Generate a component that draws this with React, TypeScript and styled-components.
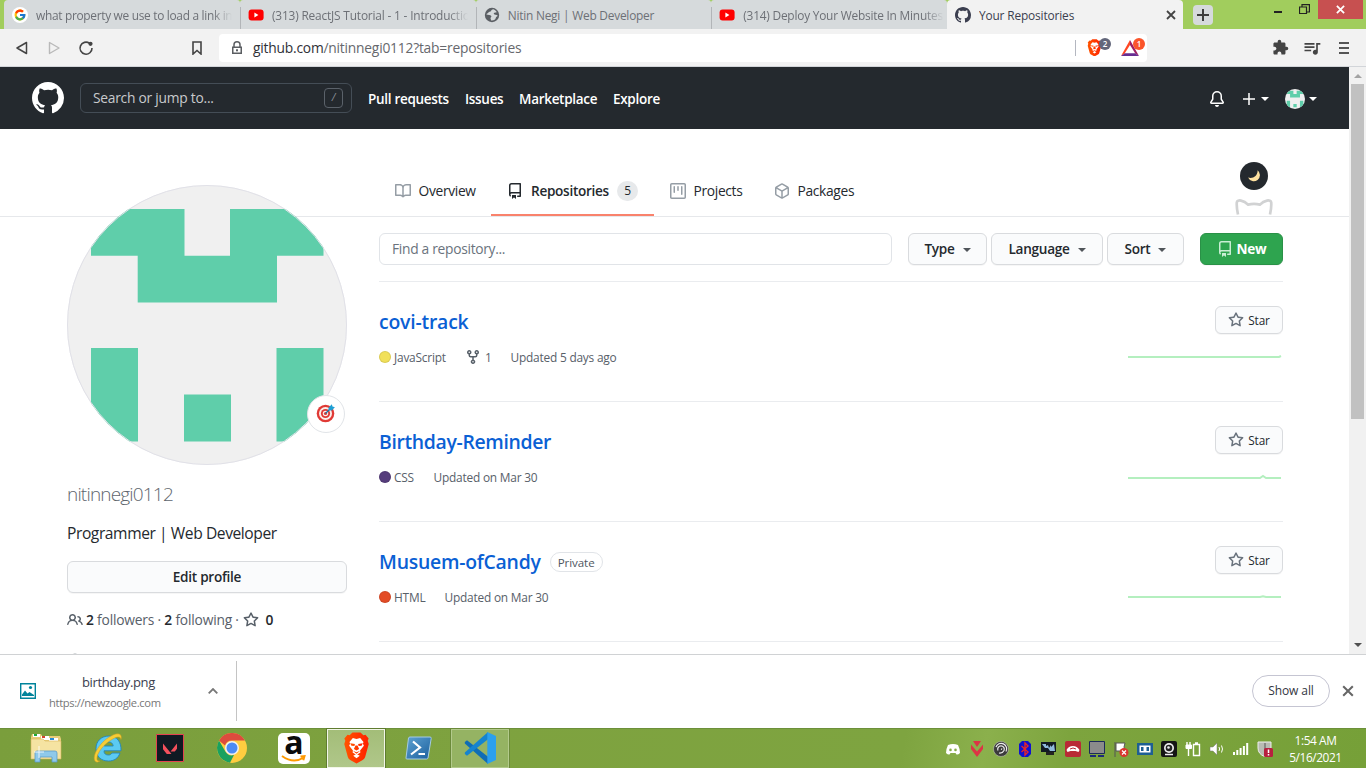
import React from 'react';
import styled, { createGlobalStyle, css } from 'styled-components';
import { FcGoogle } from 'react-icons/fc';
import { MdExtension, MdQueueMusic } from 'react-icons/md';

const Global = createGlobalStyle`
  * { box-sizing: border-box; }
  body { margin: 0; overflow: hidden; background: #fff; color: #24292e; font-family: "Open Sans", "Noto Sans", sans-serif; }
  svg { display: block; flex: none; }
`;

/* ---------- window ---------- */
const Window = styled.div`
  width: 1366px; height: 768px; display: flex; flex-direction: column; overflow: hidden; white-space: nowrap;
`;

/* ---------- tab strip ---------- */
const TabStrip = styled.div`
  height: 29px; flex: none; background: #a1cd5d; display: flex; padding-left: 4px;
`;
const BrowserTab = styled.div<{ $active?: boolean; $first?: boolean }>`
  width: ${p => (p.$first || p.$active ? 236 : 235.67)}px; display: flex; align-items: center; padding: 0 8px; flex: none;
  font-size: 11.9px; color: ${p => (p.$active ? '#3b3e4f' : '#6d7076')};
  background: ${p => (p.$active ? '#f2f2f2' : '#d6dadc')};
  border-radius: ${p => (p.$active ? '4px 4px 0 0' : p.$first ? '4px 3px 0 0' : '3px 3px 0 0')};
`;
const TabTitle = styled.span<{ $fade?: boolean; $ls?: number }>`
  flex: 1; overflow: hidden; margin: 0 -5px 0 8px; line-height: 30px; height: 30px; letter-spacing: ${p => p.$ls ?? -0.22}px;
  ${p => p.$fade && css`mask-image: linear-gradient(90deg, #000 90%, transparent 100%);`}
`;
const TabDivider = styled.i`
  width: 1px; height: 22px; margin: 7px -9px 0 13px; background: #b2b5b8; flex: none; position: relative;
`;
const TabClose = styled.span`margin-right: -1px; padding-left: 5px;`;
const NewTab = styled.div`
  width: 20px; height: 20px; margin: 5px 0 0 10px; border-radius: 4px; background: #d6dadc; display: grid; place-items: center;
`;
const WindowControls = styled.div`
  margin-left: auto; display: flex; height: 19px; padding-right: 3px;
`;
const Control = styled.div<{ $w: number; $close?: boolean }>`
  width: ${p => p.$w}px; display: grid; place-items: center; background: ${p => (p.$close ? '#c75050' : 'transparent')};
`;

/* ---------- toolbar ---------- */
const Toolbar = styled.div`
  height: 38px; flex: none; display: flex; align-items: center; background: #f2f2f2; border-bottom: 1px solid #d2d5d9; color: #3b3e4f; padding-right: 5px;
`;
const ToolButton = styled.div<{ $w: number; $dim?: boolean; $ml?: number | 'auto' }>`
  width: ${p => p.$w}px; display: grid; place-items: center; color: ${p => (p.$dim ? '#b9b9b9' : '#444')};
  margin-left: ${p => (p.$ml === 'auto' ? 'auto' : `${p.$ml ?? 0}px`)};
`;
const Address = styled.div`
  width: 928px; height: 28px; margin-left: 8px; background: #fff; border-radius: 4px; display: flex; align-items: center; padding: 0 0 0 10px;
  font-size: 13.8px; letter-spacing: -0.21px; color: #66686d; b { font-weight: 400; color: #2f3137; }
`;
const Url = styled.span`flex: 1; margin-left: 8px; line-height: 28px;`;
const AddressRule = styled.i`width: 1px; height: 16px; background: #b4b7c0; margin-right: 11px;`;
const ShieldSlot = styled.div`position: relative; width: 34px; height: 18px; display: flex; align-items: center; & + & { width: 26px; }`;
const Badge = styled.span<{ $bg: string }>`
  position: absolute; left: 12px; top: -1px; width: 12px; height: 12px; border-radius: 6px; background: ${p => p.$bg}; color: #fff;
  font-size: 8px; line-height: 12px; text-align: center; font-weight: 600; letter-spacing: 0;
`;

/* ---------- page ---------- */
const Viewport = styled.div`height: 587px; flex: none; display: flex; overflow: hidden;`;
const Page = styled.div`width: 1349px; height: 587px; overflow: hidden; background: #fff;`;
const Scrollbar = styled.div`
  width: 17px; background: #f1f1f1; display: flex; flex-direction: column; justify-content: space-between; align-items: center; padding: 7px 0 7px;
`;
const Thumb = styled.div`width: 13px; height: 335px; background: #c1c1c1; margin: 6px 0 auto;`;

const Header = styled.header`
  height: 62px; background: #24292e; display: flex; align-items: center; padding: 0 32px; color: #fff;
`;
const SearchBox = styled.div`
  width: 272px; height: 30px; margin: 0 16px; border: 1px solid #444d56; border-radius: 6px; display: flex; align-items: center; justify-content: space-between;
  padding: 0 8px 0 12px; font-size: 13.8px; letter-spacing: -0.25px; color: #c8cacc;
`;
const SearchHint = styled.span`line-height: 27px; height: 28px;`;
const SlashKey = styled.span`
  width: 19px; height: 20px; border: 1px solid #5b626a; border-radius: 4px; text-align: center; line-height: 17px; font-size: 10.5px; color: #8a9097; font-style: italic;
`;
const HeaderLink = styled.span<{ $w: number }>`
  width: ${p => p.$w}px; margin-right: 16px; font-size: 13.5px; font-weight: 600; padding-top: 2px; letter-spacing: -0.3px;
`;
const HeaderTools = styled.div`margin-left: auto; display: flex; align-items: center; padding-top: 2px;`;
const Caret = styled.i<{ $ml?: number; $gray?: boolean }>`
  border: 4px solid transparent; border-top-color: ${p => (p.$gray ? '#50555a' : 'currentColor')}; border-bottom: 0;
  margin: ${p => (p.$gray ? 4 : 0)}px 0 0 ${p => p.$ml ?? 8}px;
`;
const CreateMenu = styled.div`display: flex; align-items: center; margin: 0 16px 0 18px;`;

const ProfileNav = styled.nav`
  height: 88px; border-bottom: 1px solid #e6e8eb; display: flex; align-items: flex-end; padding: 0 76px 0 379px;
`;
const NavTab = styled.div<{ $w: number; $on?: boolean }>`
  width: ${p => p.$w}px; height: 49px; padding: 0 16px; display: flex; align-items: center; font-size: ${p => (p.$on ? 13.6 : 13.8)}px; color: #24292e;
  border-bottom: 2px solid ${p => (p.$on ? '#f9826c' : 'transparent')}; font-weight: ${p => (p.$on ? 600 : 400)};
  letter-spacing: ${p => (p.$on ? -0.3 : -0.33)}px;
  svg { color: ${p => (p.$on ? '#24292e' : '#959da5')}; margin-right: ${p => (p.$on ? 8 : 7.5)}px; }
`;
const Counter = styled.span`
  width: 21px; height: 20px; border-radius: 10px; background: #e7e9eb; margin-left: auto; text-align: center; line-height: 20px; font-size: 12px; font-weight: 500;
`;
const ModeSwitch = styled.div`
  margin-left: auto; width: 38px; height: 54px; display: flex; flex-direction: column; align-items: center; justify-content: space-between; padding-bottom: 1px;
`;
const ModeButton = styled.div`width: 28px; height: 28px; border-radius: 50%; background: #24292e; display: grid; place-items: center;`;

const Columns = styled.div`display: flex; padding: 0 66px 0 67px;`;
const Sidebar = styled.aside`width: 280px; margin: -32px 32px 0 0; position: relative;`;
const AvatarFrame = styled.div`width: 280px; height: 280px; position: relative;`;
const StatusDot = styled.div`
  position: absolute; right: 2px; bottom: 32px; width: 38px; height: 38px; border-radius: 50%; background: #fff; border: 1px solid #e1e4e8; display: grid; place-items: center;
  svg { margin: -3px 0 0 0; }
`;
const Login = styled.div`margin-top: 15px; height: 28px; line-height: 28px; font-size: 19px; font-weight: 300; color: #5e656d; letter-spacing: -0.82px;`;
const Bio = styled.div`margin-top: 13px; height: 24px; line-height: 25px; font-size: 15.6px; letter-spacing: -0.42px;`;
const Button = styled.div<{ $w: number; $h?: number; $green?: boolean; $small?: boolean }>`
  width: ${p => p.$w}px; height: ${p => p.$h ?? 32}px; display: flex; align-items: center; justify-content: center; flex: none;
  border: 1px solid ${p => (p.$green ? '#2a9147' : '#d9dbde')}; border-radius: 6px; background: ${p => (p.$green ? '#2ea44f' : '#fafbfc')};
  box-shadow: 0 1px 0 rgba(27, 31, 35, 0.04); font-size: ${p => (p.$small ? 11.8 : 13.6)}px; letter-spacing: ${p => (p.$small ? -0.15 : -0.28)}px;
  font-weight: ${p => (p.$green ? 700 : p.$small ? 500 : 600)}; color: ${p => (p.$green ? '#fff' : '#24292e')};
  padding-bottom: ${p => (p.$small ? 0 : 2)}px;
`;
const EditButton = styled(Button)`margin-top: 16px;`;
const Follow = styled.div`
  margin-top: 16.5px; height: 20px; display: flex; align-items: center; font-size: 13.8px; letter-spacing: -0.2px; color: #586069; white-space: pre;
  b { font-weight: 600; color: #24292e; }
  svg + b { margin-left: 3px; }
  svg:last-of-type { margin-left: 1px; }
`;
const Organization = styled.div`margin-top: 22.5px; color: #9aa0a7;`;

const Main = styled.main`width: 904px;`;
const FilterRow = styled.div`height: 65px; border-bottom: 1px solid #eaecef; display: flex; align-items: center; gap: 4px;`;
const FindInput = styled.div`
  width: 513px; height: 32px; margin-right: 12px; border: 1px solid #e1e4e8; border-radius: 6px; padding: 0 12px; line-height: 29px; font-size: 13.8px; letter-spacing: -0.3px; color: #6a737d;
`;
const NewButton = styled(Button)`margin-left: 12px; gap: 4px; svg { color: #c9eed4; margin-top: 2px; }`;
const Repo = styled.section`height: 120px; border-bottom: 1px solid #eaecef; display: flex; justify-content: space-between; padding: 24px 0;`;
const RepoTitle = styled.h3<{ $ls: number }>`
  margin: 0; height: 32px; line-height: 30px; font-size: 19.4px; font-weight: 600; color: #0a60d4; display: flex; align-items: center; letter-spacing: ${p => p.$ls}px;
`;
const Private = styled.span`
  margin-left: 9px; width: 53px; height: 20px; border: 1px solid #e1e4e8; border-radius: 10px; font-size: 11.6px; font-weight: 500; line-height: 19px; color: #50575f; text-align: center; letter-spacing: -0.1px;
`;
const Meta = styled.div`height: 20px; margin-top: 9px; display: flex; align-items: center; font-size: 11.9px; letter-spacing: -0.21px; color: #586069;`;
const Lang = styled.span<{ $w: number }>`width: ${p => p.$w}px; display: flex; align-items: center; gap: 3px;`;
const Dot = styled.i<{ $c: string }>`width: 12px; height: 12px; border-radius: 50%; background: ${p => p.$c}; box-shadow: inset 0 0 0 1px rgba(27, 31, 35, 0.1);`;
const Forks = styled.span`width: 45.5px; display: flex; align-items: center; gap: 4px; svg { margin-top: -1px; }`;
const RepoSide = styled.div`width: 155px; display: flex; flex-direction: column; align-items: flex-end; justify-content: space-between; padding-bottom: 8px;`;
const StarButton = styled(Button)`gap: 4px; svg { color: #6a737d; margin-top: -1px; }`;

/* ---------- downloads ---------- */
const Downloads = styled.div`
  height: 74px; flex: none; border-top: 1px solid #d0d2d4; background: #fff; display: flex; align-items: center; color: #3b3e4f; padding-bottom: 1.5px;
`;
const DownloadItem = styled.div`width: 237px; height: 60px; border-right: 1px solid #c4c4c4; display: flex; align-items: center; padding: 0 18px 0 20px;`;
const FileInfo = styled.div`margin: 4px 0 0 13px; flex: 1; display: flex; flex-direction: column;`;
const FileName = styled.span`margin-left: 33px; font-size: 13px; line-height: 18px; padding-bottom: 2px; letter-spacing: -0.36px;`;
const FileHost = styled.span`font-size: 11.2px; line-height: 20px; color: #777; letter-spacing: -0.36px;`;
const ShowAll = styled.div`
  margin-left: auto; width: 78px; height: 32px; border: 1px solid #c5c5d2; border-radius: 16px; font-size: 12px; font-weight: 500; line-height: 30px; text-align: center;
  letter-spacing: -0.1px; color: #33363f;
`;
const CloseBar = styled.div`width: 36px; display: grid; place-items: center;`;

/* ---------- taskbar ---------- */
const Taskbar = styled.div`
  height: 40px; flex: none; display: flex; border-top: 1px solid #6c903a; padding-left: 17px;
  background: linear-gradient(100deg, #7a9e3c 0%, #7ea23f 35%, #7ea440 66%, #8bb04c 72%, #7da43e 78%, #76a038 100%);
`;
const AppButton = styled.div<{ $state?: 'active' | 'open' }>`
  width: 58px; height: 39px; margin-right: 4px; display: grid; place-items: center; padding-bottom: 1px;
  ${p => p.$state === 'active' && css`background: linear-gradient(180deg, #a3bd78, #b0c78a); border: 1px solid #f2f6e8; outline: 1px solid #5f7c30;`}
  ${p => p.$state === 'open' && css`background: #95b363; border: 1px solid #b3ca8c; outline: 1px solid #6b8a3a;`}
`;
const Tray = styled.div`margin-left: auto; display: flex; align-items: center; padding-top: 1px;`;
const TrayIcon = styled.div`width: 24px; display: grid; place-items: center;`;
const Clock = styled.div`
  width: 77px; margin-right: 12px; text-align: center; color: #fff; font-size: 11.9px; line-height: 17px; letter-spacing: -0.42px; padding-top: 3px;
`;

/* ---------- octicons ---------- */
const paths = {
  github: 'M8 0C3.58 0 0 3.58 0 8c0 3.54 2.29 6.53 5.47 7.59.4.07.55-.17.55-.38 0-.19-.01-.82-.01-1.49-2.01.37-2.53-.49-2.69-.94-.09-.23-.48-.94-.82-1.13-.28-.15-.68-.52-.01-.53.63-.01 1.08.58 1.23.82.72 1.21 1.87.87 2.33.66.07-.52.28-.87.51-1.07-1.78-.2-3.64-.89-3.64-3.95 0-.87.31-1.59.82-2.15-.08-.2-.36-1.02.08-2.12 0 0 .67-.21 2.2.82.64-.18 1.32-.27 2-.27.68 0 1.36.09 2 .27 1.53-1.04 2.2-.82 2.2-.82.44 1.1.16 1.92.08 2.12.51.56.82 1.27.82 2.15 0 3.07-1.87 3.75-3.65 3.95.29.25.54.73.54 1.48 0 1.07-.01 1.93-.01 2.2 0 .21.15.46.55.38A8.013 8.013 0 0016 8c0-4.42-3.58-8-8-8z',
  book: 'M0 1.75A.75.75 0 01.75 1h4.253c1.227 0 2.317.59 3 1.501A3.744 3.744 0 0111.006 1h4.245a.75.75 0 01.75.75v10.5a.75.75 0 01-.75.75h-4.507a2.25 2.25 0 00-1.591.659l-.622.621a.75.75 0 01-1.06 0l-.622-.621A2.25 2.25 0 005.258 13H.75a.75.75 0 01-.75-.75V1.75zm8.755 3a2.25 2.25 0 012.25-2.25H14.5v9h-3.757c-.71 0-1.4.201-1.992.572l.004-7.322zm-1.504 7.324l.004-5.073-.002-2.253A2.25 2.25 0 005.003 2.5H1.5v9h3.757a3.75 3.75 0 011.994.574z',
  repo: 'M2 2.5A2.5 2.5 0 014.5 0h8.75a.75.75 0 01.75.75v12.5a.75.75 0 01-.75.75h-2.5a.75.75 0 110-1.5h1.75v-2h-8a1 1 0 00-.714 1.7.75.75 0 01-1.072 1.05A2.495 2.495 0 012 11.5v-9zm10.5-1V9h-8c-.356 0-.694.074-1 .208V2.5a1 1 0 011-1h8zM5 12.25v3.25a.25.25 0 00.4.2l1.45-1.087a.25.25 0 01.3 0L8.6 15.7a.25.25 0 00.4-.2v-3.25a.25.25 0 00-.25-.25h-3.5a.25.25 0 00-.25.25z',
  project: 'M1.75 0A1.75 1.75 0 000 1.75v12.5C0 15.216.784 16 1.75 16h12.5A1.75 1.75 0 0016 14.25V1.75A1.75 1.75 0 0014.25 0H1.75zM1.5 1.75a.25.25 0 01.25-.25h12.5a.25.25 0 01.25.25v12.5a.25.25 0 01-.25.25H1.75a.25.25 0 01-.25-.25V1.75zM11.75 3a.75.75 0 00-.75.75v7.5a.75.75 0 001.5 0v-7.5a.75.75 0 00-.75-.75zm-8.25.75a.75.75 0 011.5 0v5.5a.75.75 0 01-1.5 0v-5.5zM8 3a.75.75 0 00-.75.75v3.5a.75.75 0 001.5 0v-3.5A.75.75 0 008 3z',
  box: 'M8.878.392a1.75 1.75 0 00-1.756 0l-5.25 3.045A1.75 1.75 0 001 4.951v6.098c0 .624.332 1.2.872 1.514l5.25 3.045a1.75 1.75 0 001.756 0l5.25-3.045c.54-.313.872-.89.872-1.514V4.951c0-.624-.332-1.2-.872-1.514L8.878.392zM7.875 1.69a.25.25 0 01.25 0l4.63 2.685L8 7.133 3.245 4.375l4.63-2.685zM2.5 5.677v5.372c0 .09.047.171.125.216l4.625 2.683V8.432L2.5 5.677zm6.25 8.271l4.625-2.683a.25.25 0 00.125-.216V5.677L8.75 8.432v5.516z',
  star: 'M8 .25a.75.75 0 01.673.418l1.882 3.815 4.21.612a.75.75 0 01.416 1.279l-3.046 2.97.719 4.192a.75.75 0 01-1.088.791L8 12.347l-3.766 1.98a.75.75 0 01-1.088-.79l.72-4.194L.818 6.374a.75.75 0 01.416-1.28l4.21-.611L7.327.668A.75.75 0 018 .25zm0 2.445L6.615 5.5a.75.75 0 01-.564.41l-3.097.45 2.24 2.184a.75.75 0 01.216.664l-.528 3.084 2.769-1.456a.75.75 0 01.698 0l2.77 1.456-.53-3.084a.75.75 0 01.216-.664l2.24-2.183-3.096-.45a.75.75 0 01-.564-.41L8 2.694v.001z',
  fork: 'M5 3.25a.75.75 0 11-1.5 0 .75.75 0 011.5 0zm0 2.122a2.25 2.25 0 10-1.5 0v.878A2.25 2.25 0 005.75 8.5h1.5v2.128a2.251 2.251 0 101.5 0V8.5h1.5a2.25 2.25 0 002.25-2.25v-.878a2.25 2.25 0 10-1.5 0v.878a.75.75 0 01-.75.75h-4.5A.75.75 0 015 6.25v-.878zm3.75 7.378a.75.75 0 11-1.5 0 .75.75 0 011.5 0zm3-8.75a.75.75 0 100-1.5.75.75 0 000 1.5z',
  people: 'M5.5 3.5a2 2 0 100 4 2 2 0 000-4zM2 5.5a3.5 3.5 0 115.898 2.549 5.507 5.507 0 013.034 4.084.75.75 0 11-1.482.235 4.001 4.001 0 00-7.9 0 .75.75 0 01-1.482-.236A5.507 5.507 0 013.102 8.05 3.49 3.49 0 012 5.5zM11 4a.75.75 0 100 1.5 1.5 1.5 0 01.666 2.844.75.75 0 00-.416.672v.352a.75.75 0 00.574.73c1.2.289 2.162 1.2 2.522 2.372a.75.75 0 101.434-.44 5.01 5.01 0 00-2.56-3.012A3 3 0 0011 4z',
  bell: 'M8 16a2 2 0 001.985-1.75c.017-.137-.097-.25-.235-.25h-3.5c-.138 0-.252.113-.235.25A2 2 0 008 16zM3 5a5 5 0 0110 0v2.947c0 .05.015.098.042.139l1.703 2.555A1.518 1.518 0 0113.482 13H2.518a1.518 1.518 0 01-1.263-2.36l1.703-2.554A.25.25 0 003 7.947V5zm5-3.5A3.5 3.5 0 004.5 5v2.947c0 .346-.102.683-.294.97l-1.703 2.556a.018.018 0 00-.003.01l.001.006c0 .002.002.004.004.006a.017.017 0 00.006.004l.007.001h10.964l.007-.001a.016.016 0 00.006-.004.016.016 0 00.004-.006l.001-.007a.017.017 0 00-.003-.01l-1.703-2.554a1.75 1.75 0 01-.294-.97V5A3.5 3.5 0 008 1.5z',
};
const Octicon = ({ name, size = 16 }: { name: keyof typeof paths; size?: number }) => (
  <svg width={size} height={size} viewBox="0 0 16 16" fill="currentColor"><path fillRule="evenodd" d={paths[name]} /></svg>
);

const Cross = ({ size, color, w = 2 }: { size: number; color: string; w?: number }) => (
  <svg width={size} height={size} viewBox="0 0 10 10"><path d="M1 1l8 8M9 1l-8 8" stroke={color} strokeWidth={w} /></svg>
);
const Identicon = ({ size, id }: { size: number; id: string }) => (
  <svg width={size} height={size} viewBox="0 0 280 280">
    <clipPath id={id}><circle cx="140" cy="140" r="140" /></clipPath>
    <g clipPath={`url(#${id})`}>
      <path d="M0 0h280v280H0z" fill="#f0f0f0" />
      <path fill="#5fceaa" d="M24 24h93.5v46.7H163V24h93.5v46.7H210v46.7H70.7V70.7H24zM24 163h47v93.5H24zM209.5 163h47v93.5h-47zM117 209.5h47v47h-47z" />
    </g>
    <circle cx="140" cy="140" r="139.5" fill="none" stroke="#e1e1e8" />
  </svg>
);
const YouTube = () => (
  <svg width="16" height="16" viewBox="0 0 16 16"><rect x=".6" y="2.4" width="15" height="11.2" rx="3" fill="#f00" /><path d="M6.4 5.6v4.8l4-2.4z" fill="#fff" /></svg>
);
const Globe = () => (
  <svg width="16" height="16" viewBox="0 0 16 16">
    <circle cx="8" cy="8" r="7.2" fill="#5b5f64" />
    <path d="M9.2 2.2C7 2.6 7.4 4.6 5.6 4.8 4.2 5 4.4 6.6 3 6.6L2.4 7.6C4 8.3 6.6 7.5 7.3 9c.5 1.2-1.3 1.4-.7 2.8l.6 1.8c2.8.2 4.3-1 4.6-2.8.4-1.4 1.7-1 1.8-2.3-.8-1.2-3.4-.3-3.8-1.7-.3-1.2 1.4-1.3 2.9-1.5C12.200 3.800 10.900 2.600 9.200 2.200z" fill="#d6dadc" />
  </svg>
);
const Lion = ({ size, id }: { size: number; id: string }) => (
  <svg width={size} height={size * 1.18} viewBox="0 0 34 40">
    <defs><linearGradient id={id} x1="0" x2="1"><stop stopColor="#ff5500" /><stop offset="1" stopColor="#ff2000" /></linearGradient></defs>
    <path fill={`url(#${id})`} d="M12 .5h10l3.700 3.600 2.600-.6 4 4.500-1.200 3 1.300 4-4.400 16c-.7 2.500-2.200 3.500-4.200 4.900L17 39.500l-6.800-3.600C8 34.500 6.700 33.500 6 31L1.600 15l1.300-4-1.200-3 4-4.500 2.600.6z" />
    <path fill="#fff" d="M17 8.600l4.600-1 4.200 4.800-.7 2.300 1.200 2.500-4.800 6 .4 2.400L17 28.800l-4.900-3.200.4-2.400-4.800-6 1.200-2.500-.7-2.300 4.200-4.800z" />
    <path fill={`url(#${id})`} d="M9 14l6 1.100-.6 2.600-3.800-.5zM25 14l-6 1.100.6 2.600 3.800-.5zM15.700 17h2.600l2 4.400-3.300 1.800-3.300-1.800zM12.400 23.700L17 25.500l4.600-1.800-4.600 3.500z" />
    <path fill="#fff" d="M12.900 30L17 27.600l4.100 2.400-4.100 3z" />
  </svg>
);
const Triangle = () => (
  <svg width="18" height="16" viewBox="0 0 18 16"><path d="M9 0L0 16l3.800-2.800L9 5z" fill="#ff4724" /><path d="M9 0l9 16-3.800-2.800L9 5z" fill="#9e1f63" /><path d="M0 16h18l-3.800-2.800H3.800z" fill="#662d91" /></svg>
);
const Target = () => (
  <svg width="20" height="20" viewBox="0 0 20 20">
    <circle cx="9.5" cy="10.5" r="8.8" fill="#e03a35" /><circle cx="9.5" cy="10.5" r="6.5" fill="#fbf0ec" /><circle cx="9.5" cy="10.5" r="4.6" fill="#e03a35" />
    <circle cx="9.5" cy="10.5" r="2.7" fill="#fbf0ec" /><circle cx="9.5" cy="10.5" r="1.6" fill="#e03a35" />
    <path d="M9.5 10.5l5-5" stroke="#1976a8" strokeWidth="1.2" /><path d="M12.5 4.8L15.8 1.200l.7 2.300 2.400.7-3.200 3.400-3-.3z" fill="#1e9fd4" />
  </svg>
);
const CatEars = () => (
  <svg width="38" height="16" viewBox="0 0 38 16"><path d="M3 15.500C2.200 12 1.600 6 1.800 3.400 2.200.2 8.800 1 13 5.600c4-.9 8-.9 12 0C29.200 1 35.800.2 36.200 3.400c.2 2.600-.4 8.600-1.200 12.100" fill="none" stroke="#d1d2d3" strokeWidth="2.7" /></svg>
);

/* ---------- taskbar drawings ---------- */
const Explorer = () => (
  <svg width="32" height="32" viewBox="0 0 32 32">
    <path d="M1 5l1-3h9l1 2h18l1 3v20H1z" fill="#e9cd79" /><path d="M3 2h7v3H3z" fill="#fff" /><path d="M4 2h3v2H4z" fill="#1fa838" /><path d="M11 4h8v4h-8z" fill="#fff" /><path d="M12 4h3v2h-3z" fill="#d6442d" /><path d="M19 6h9v4h-9z" fill="#fff" /><path d="M20 6h4v2h-4z" fill="#288bd6" />
    <path d="M1 7h12l2 2h16v18H1z" fill="#f5e3a2" stroke="#d9b75c" strokeWidth=".6" /><path d="M5 30V21q0-2 2-2h18q2 0 2 2v9h-5v-5H10v5z" fill="#8fc9ea" stroke="#5a9cc9" strokeWidth=".8" /><path d="M9 14v12M4 20h10" stroke="#fff" strokeWidth="1" opacity=".8" />
  </svg>
);
const Internet = () => (
  <svg width="32" height="32" viewBox="0 0 32 32">
    <path d="M17 4C9 4 4 9.500 4 16.500c0 8 5 12.500 12.500 12.500 5.500 0 9.500-2.500 11.500-8h-8c-1 1.500-2 2-3.500 2-2.800 0-4.500-1.300-4.500-4.200H29C29.500 10 25 4 17 4zm-4.800 10c.5-2.700 2.300-4 4.600-4s4 1.300 4.400 4z" fill="#5bcaf2" stroke="#2186bd" strokeWidth=".9" />
    <path d="M3.500 29.500C-1.500 24.500 9 8 21 3c6-2.500 9.300-1 8 4.500-.4-3-3.200-3-7-1.200C12.500 11 4 21.500 5 27.500q.5 1.800 3 1.500-3 2-4.500.5z" fill="#f7cd35" stroke="#cf9c1c" strokeWidth=".5" />
  </svg>
);
const Valorant = () => (
  <svg width="28" height="28" viewBox="0 0 28 28"><path d="M.5.5h27v27H.5z" fill="#101a23" stroke="#e3434f" /><path d="M7 9.500l8.500 10.600h-4.700L7 15.300zM21 9.500v5.300l-2.200 2.800h-4.200z" fill="#f4505c" /></svg>
);
const Chrome = () => (
  <svg width="30" height="30" viewBox="0 0 30 30">
    <circle cx="15" cy="15" r="15" fill="#ffcd40" /><path d="M2 7.500A15 15 0 0128 7.500H15a7.500 7.500 0 00-7 5z" fill="#dd4b3e" /><path d="M2 7.500l6.500 11.200A7.500 7.500 0 0017 22l-4 7.800A15 15 0 012 7.500z" fill="#1aa15f" /><circle cx="15" cy="15" r="7" fill="#f1f1f1" /><circle cx="15" cy="15" r="5.5" fill="#4c8bf5" />
  </svg>
);
const AmazonTile = styled.div`
  width: 32px; height: 31px; border-radius: 5px; background: #fff; color: #0b0b0b; display: flex; flex-direction: column; align-items: center;
  font: 700 32px/17px "Open Sans", sans-serif; svg { margin-top: 5px; }
`;
const PowerShell = () => (
  <svg width="30" height="24" viewBox="0 0 30 24">
    <defs><linearGradient id="shell" x2="1" y2="1"><stop stopColor="#5fa3d3" /><stop offset="1" stopColor="#1b5f9d" /></linearGradient></defs>
    <path d="M7 1h20q1.500 0 1.200 1.500L25 22q-.3 1-1.500 1H4q-1.200 0-1-1L5.500 2Q5.800 1 7 1z" fill="url(#shell)" stroke="#a5cbe4" /><path d="M10 5.500l7 6-9 7M15.500 18h6.500" fill="none" stroke="#fff" strokeWidth="2.2" />
  </svg>
);
const VsCode = () => (
  <svg width="32" height="32" viewBox="0 0 32 32"><path d="M.8 10L3 8.200l21 16.500V32L.8 11.500z" fill="#0f6db5" /><path d="M.8 22L3 23.800 24 7.300V0L.8 20.500z" fill="#1584cf" /><path d="M23.300 0L32 4v24l-8.700 4z" fill="#2ba0ed" /></svg>
);

const trayIcons: React.ReactNode[] = [
  <path key="discord" d="M3 4q5-2 10 0 2 4 2 8-2 2-3.500 1.500L10.500 12h-5l-1 1.500Q3 14 1 12q0-4 2-8zm2.500 3.500a1.300 1.400 0 100 2.800 1.300 1.400 0 000-2.800zm5 0a1.300 1.400 0 100 2.800 1.300 1.400 0 000-2.800z" fill="#fff" fillRule="evenodd" />,
  <g key="v" fill="#dc3545"><path d="M4 0h8L8 6z" /><path d="M2 3.500l6 7 6-7V8l-6 8-6-8z" /></g>,
  <g key="swirl"><circle cx="8" cy="8" r="7.5" fill="#3b3b3b" stroke="#ccc" strokeWidth=".5" /><path d="M3 6a5.500 5.500 0 1110 4.500M5 9.500a3.300 3.300 0 116 0q-1.500 3-5 2.500M8 8.500q1-.5.5-1" fill="none" stroke="#eee" strokeWidth="1.2" /></g>,
  <g key="bt"><path d="M5 0h6l3 3v10l-3 3H5l-3-3V3z" fill="#1010d0" /><path d="M4.500 5l6.500 6-3 3V2l3 3-6.500 6" fill="none" stroke="#e5252c" strokeWidth="1.4" /></g>,
  <g key="mon"><path d="M0 1h15v10H0z" fill="#121923" /><path d="M1 3h4v2l2-1 1 3 2-3v2l3-3 1 7H9L7 7 4 7z" fill="#8fb9dc" /><path d="M5 11h8v3H5z" fill="#222" /></g>,
  <g key="car"><rect width="16" height="16" rx="2" fill="#b92a35" /><path d="M1.500 9q2-4 6.500-4 4 0 6.500 4l-1 2-3-1h-5l-3 1z" fill="#fff" /><path d="M5 8q3-2 6 0" stroke="#b92a35" fill="none" /></g>,
  <g key="disp"><path d="M.5.5h15v12H.5z" fill="#8b8b8b" stroke="#1c2a5a" /><path d="M1 14h6v2H1zM9 14h6v2H9z" fill="#1c2a7a" /></g>,
  <g key="flag"><path d="M2 1v15M3 2h9l-1 4 1 4H3z" fill="#fff" stroke="#555" strokeWidth="1" /><circle cx="11" cy="11.5" r="4.5" fill="#d8362e" /><path d="M9 9.500l4 4M13 9.500l-4 4" stroke="#fff" strokeWidth="1.2" /></g>,
  <g key="panel"><path d="M0 2h16v12H0z" fill="#1e5f93" /><path d="M2.500 4.500h11v7h-11z" fill="#fff" /><path d="M4 6h2.500v4H4zM9.500 6H12v4H9.500z" fill="#1e5f93" /></g>,
  <g key="cam"><rect width="16" height="16" rx="2" fill="#151515" /><circle cx="8" cy="7" r="5" fill="#eee" /><circle cx="8" cy="7" r="3.3" fill="#222" /><circle cx="7.5" cy="6.5" r="1.3" fill="#eee" /><path d="M4 13.500h8" stroke="#eee" strokeWidth="1.5" /></g>,
  <g key="bat" fill="none" stroke="#fff"><path d="M8.500 3.500h6v11h-6zM10 2h3M3.500 8v7M2 1v4M5 1v4" strokeWidth="1.4" /><path d="M1 4h5.500v3.500H1z" fill="#fff" /></g>,
  <g key="vol"><path d="M1 6h3l4-4v12l-4-4H1z" fill="#fff" stroke="#777" strokeWidth=".5" /><path d="M10 6q1.200 2 0 4M12.500 4.500q2 3.500 0 7" stroke="#fff" fill="none" /></g>,
  <path key="sig" d="M0 11h2v3H0zM3.300 9h2v5h-2zM6.600 7h2v7h-2zM9.900 5h2v9h-2zM13.200 2h2v12h-2z" fill="#fff" />,
  <g key="def"><path d="M1 1h13v6q0 6-6.500 8.500Q1 13 1 7z" fill="#b9bcb4" stroke="#eee" /><path d="M8 2v12" stroke="#555" /><rect x="7" y="7" width="9" height="9" rx="1.5" fill="#b7203f" /><path d="M11.500 8.500v3.500M11.500 13v1.500" stroke="#fff" strokeWidth="1.5" /></g>,
];

type RepoInfo = { name: string; ls: number; lang: string; color: string; langW: number; forks?: number; updated: string; isPrivate?: boolean; spark: string };
const repos: RepoInfo[] = [
  { name: 'covi-track', ls: -0.2, lang: 'JavaScript', color: '#f1e05a', langW: 86, forks: 1, updated: 'Updated 5 days ago', spark: 'M0 3H151L153 2' },
  { name: 'Birthday-Reminder', ls: -0.34, lang: 'CSS', color: '#563d7c', langW: 54.5, updated: 'Updated on Mar 30', spark: 'M0 4H132L135 2L138 4H153' },
  { name: 'Musuem-ofCandy', ls: -0.24, lang: 'HTML', color: '#e34c26', langW: 65.5, updated: 'Updated on Mar 30', isPrivate: true, spark: 'M0 3H132L135 2.3L138 3H153' },
];

export default function App() {
  return (
    <Window>
      <Global />
      <TabStrip>
        <BrowserTab $first>
          <svg width="16" height="16" viewBox="0 0 16 16"><circle cx="8" cy="8" r="8" fill="#fff" /><g transform="translate(1.5 1.5)"><FcGoogle size={13} /></g></svg>
          <TabTitle $fade $ls={-0.3}>what property we use to load a link in</TabTitle><TabDivider />
        </BrowserTab>
        <BrowserTab><YouTube /><TabTitle $fade $ls={-0.18}>(313) ReactJS Tutorial - 1 - Introduction</TabTitle><TabDivider /></BrowserTab>
        <BrowserTab><Globe /><TabTitle>Nitin Negi | Web Developer</TabTitle><TabDivider /></BrowserTab>
        <BrowserTab><YouTube /><TabTitle $fade $ls={-0.22}>(314) Deploy Your Website In Minutes</TabTitle></BrowserTab>
        <BrowserTab $active><Octicon name="github" /><TabTitle $ls={-0.15}>Your Repositories</TabTitle><TabClose><Cross size={10} color="#444" w={1.8} /></TabClose></BrowserTab>
        <NewTab><svg width="12" height="12" viewBox="0 0 12 12"><path d="M6 0v12M0 6h12" stroke="#3d3d3d" strokeWidth="2" /></svg></NewTab>
        <WindowControls>
          <Control $w={26}><svg width="9" height="9" viewBox="0 0 9 9"><path d="M0 7h8" stroke="#222" strokeWidth="2" /></svg></Control>
          <Control $w={27}><svg width="11" height="11" viewBox="0 0 11 11"><path d="M.5 3h7v6.500h-7zM3 3V.7h7.400V8H8" fill="none" stroke="#222" strokeWidth="1.2" /></svg></Control>
          <Control $w={45} $close><Cross size={9} color="#fff" w={2} /></Control>
        </WindowControls>
      </TabStrip>

      <Toolbar>
        <ToolButton $w={44}><svg width="12" height="14" viewBox="0 0 12 14"><path d="M10.500 1.500v11L1 7z" fill="none" stroke="currentColor" strokeWidth="1.5" strokeLinejoin="round" /></svg></ToolButton>
        <ToolButton $w={16} $ml={2} $dim><svg width="12" height="14" viewBox="0 0 12 14"><path d="M1.500 1.500v11L11 7z" fill="none" stroke="currentColor" strokeWidth="1.4" strokeLinejoin="round" /></svg></ToolButton>
        <ToolButton $w={48}><svg width="16" height="16" viewBox="0 0 16 16"><path d="M11.500 3.300A6 6 0 1014 8" fill="none" stroke="currentColor" strokeWidth="1.6" /><circle cx="12.5" cy="3.8" r="2.1" fill="currentColor" /></svg></ToolButton>
        <ToolButton $w={28} $ml={73}><svg width="10" height="14" viewBox="0 0 10 14"><path d="M1 1h8v12L5 9.500 1 13z" fill="none" stroke="currentColor" strokeWidth="1.6" /></svg></ToolButton>
        <Address>
          <svg width="16" height="16" viewBox="0 0 16 16"><path d="M5 7V4.800a3 3 0 016 0V7" fill="none" stroke="#5b5e62" strokeWidth="1.5" /><path fillRule="evenodd" fill="#5b5e62" d="M3 6.500h10V14H3zM4.500 8v4.500h7V8z" /><rect x="7" y="9.3" width="2" height="2" fill="#5b5e62" /></svg>
          <Url><b>github.com</b>/nitinnegi0112?tab=repositories</Url>
          <AddressRule />
          <ShieldSlot><Lion size={15} id="lionSmall" /><Badge $bg="#62667a">2</Badge></ShieldSlot>
          <ShieldSlot><Triangle /><Badge $bg="#fb542b">1</Badge></ShieldSlot>
        </Address>
        <ToolButton $w={34} $ml="auto"><MdExtension size={17} /></ToolButton>
        <ToolButton $w={30}><MdQueueMusic size={20} /></ToolButton>
        <ToolButton $w={34}><svg width="10" height="12" viewBox="0 0 10 12"><path d="M0 1h10M0 6h10M0 11h10" stroke="#555" strokeWidth="2" /></svg></ToolButton>
      </Toolbar>

      <Viewport>
        <Page>
          <Header>
            <Octicon name="github" size={32} />
            <SearchBox><SearchHint>Search or jump to...</SearchHint><SlashKey>/</SlashKey></SearchBox>
            <HeaderLink $w={81}>Pull requests</HeaderLink>
            <HeaderLink $w={38}>Issues</HeaderLink>
            <HeaderLink $w={78}>Marketplace</HeaderLink>
            <HeaderLink $w={48}>Explore</HeaderLink>
            <HeaderTools>
              <Octicon name="bell" />
              <CreateMenu><svg width="12" height="12" viewBox="0 0 12 12"><path d="M6 0v12M0 6h12" stroke="#fff" strokeWidth="1.5" /></svg><Caret $ml={6} /></CreateMenu>
              <Identicon size={20} id="avatarSmall" />
              <Caret $ml={4} />
            </HeaderTools>
          </Header>

          <ProfileNav>
            <NavTab $w={112}><Octicon name="book" />Overview</NavTab>
            <NavTab $w={163} $on><Octicon name="repo" />Repositories<Counter>5</Counter></NavTab>
            <NavTab $w={104}><Octicon name="project" />Projects</NavTab>
            <NavTab $w={114}><Octicon name="box" />Packages</NavTab>
            <ModeSwitch>
              <ModeButton><svg width="12" height="12" viewBox="0 0 12 12"><path d="M9.600.2A6.200 6.200 0 11.100 7.600C5 9 9.800 6 9.600.2z" fill="#ffe2a0" /></svg></ModeButton>
              <CatEars />
            </ModeSwitch>
          </ProfileNav>

          <Columns>
            <Sidebar>
              <AvatarFrame><Identicon size={280} id="avatarLarge" /><StatusDot><Target /></StatusDot></AvatarFrame>
              <Login>nitinnegi0112</Login>
              <Bio>Programmer | Web Developer</Bio>
              <EditButton $w={280}>Edit profile</EditButton>
              <Follow><Octicon name="people" /><b>2</b> followers · <b>2</b> following · <Octicon name="star" /><b> 0</b></Follow>
              <Organization><svg width="16" height="16" viewBox="0 0 16 16"><circle cx="8" cy="7.3" r="5" fill="none" stroke="currentColor" strokeWidth="1.5" /></svg></Organization>
            </Sidebar>
            <Main>
              <FilterRow>
                <FindInput>Find a repository...</FindInput>
                <Button $w={79}>Type<Caret $gray /></Button>
                <Button $w={112}>Language<Caret $gray /></Button>
                <Button $w={77}>Sort<Caret $gray /></Button>
                <NewButton $w={83} $green><Octicon name="repo" />New</NewButton>
              </FilterRow>
              {repos.map(r => (
                <Repo key={r.name}>
                  <div>
                    <RepoTitle $ls={r.ls}>{r.name}{r.isPrivate && <Private>Private</Private>}</RepoTitle>
                    <Meta>
                      <Lang $w={r.langW}><Dot $c={r.color} />{r.lang}</Lang>
                      {r.forks && <Forks><Octicon name="fork" />{r.forks}</Forks>}
                      {r.updated}
                    </Meta>
                  </div>
                  <RepoSide>
                    <StarButton $w={68} $h={28} $small><Octicon name="star" />Star</StarButton>
                    <svg width="155" height="16" viewBox="0 -1 155 16"><path d={r.spark} fill="none" stroke="#b4efbf" strokeWidth="2" /></svg>
                  </RepoSide>
                </Repo>
              ))}
            </Main>
          </Columns>
        </Page>
        <Scrollbar>
          <svg width="8" height="4" viewBox="0 0 8 4"><path d="M0 4l4-4 4 4z" fill="#a3a3a3" /></svg>
          <Thumb />
          <svg width="8" height="4" viewBox="0 0 8 4"><path d="M0 0l4 4 4-4z" fill="#505050" /></svg>
        </Scrollbar>
      </Viewport>

      <Downloads>
        <DownloadItem>
          <svg width="16" height="16" viewBox="0 0 16 16"><path d="M.7.7h14.600v14.600H.7z" fill="none" stroke="#00839b" strokeWidth="1.4" /><path d="M2 13v-1.500l3-4 2.500 3 2-1.500 4.500 3V13z" fill="#00839b" /><circle cx="10.5" cy="4.5" r="1.6" fill="#00839b" /></svg>
          <FileInfo><FileName>birthday.png</FileName><FileHost>https://newzoogle.com</FileHost></FileInfo>
          <svg width="10" height="6" viewBox="0 0 10 6"><path d="M.7 5.300L5 1l4.300 4.300" fill="none" stroke="#777" strokeWidth="1.8" /></svg>
        </DownloadItem>
        <ShowAll>Show all</ShowAll>
        <CloseBar><Cross size={12} color="#666" w={1.7} /></CloseBar>
      </Downloads>

      <Taskbar>
        <AppButton><Explorer /></AppButton>
        <AppButton><Internet /></AppButton>
        <AppButton><Valorant /></AppButton>
        <AppButton><Chrome /></AppButton>
        <AppButton><AmazonTile>a<svg width="26" height="8" viewBox="0 0 26 8"><path d="M1 1q11 8 21 2M19.500 1.500l4-.3-1.200 4" fill="none" stroke="#ff9900" strokeWidth="2" /></svg></AmazonTile></AppButton>
        <AppButton $state="active"><Lion size={27} id="lionLarge" /></AppButton>
        <AppButton><PowerShell /></AppButton>
        <AppButton $state="open"><VsCode /></AppButton>
        <Tray>{trayIcons.map((icon, i) => <TrayIcon key={i}><svg width="16" height="16" viewBox="0 0 16 16">{icon}</svg></TrayIcon>)}</Tray>
        <Clock>1:54 AM<br />5/16/2021</Clock>
      </Taskbar>
    </Window>
  );
}
